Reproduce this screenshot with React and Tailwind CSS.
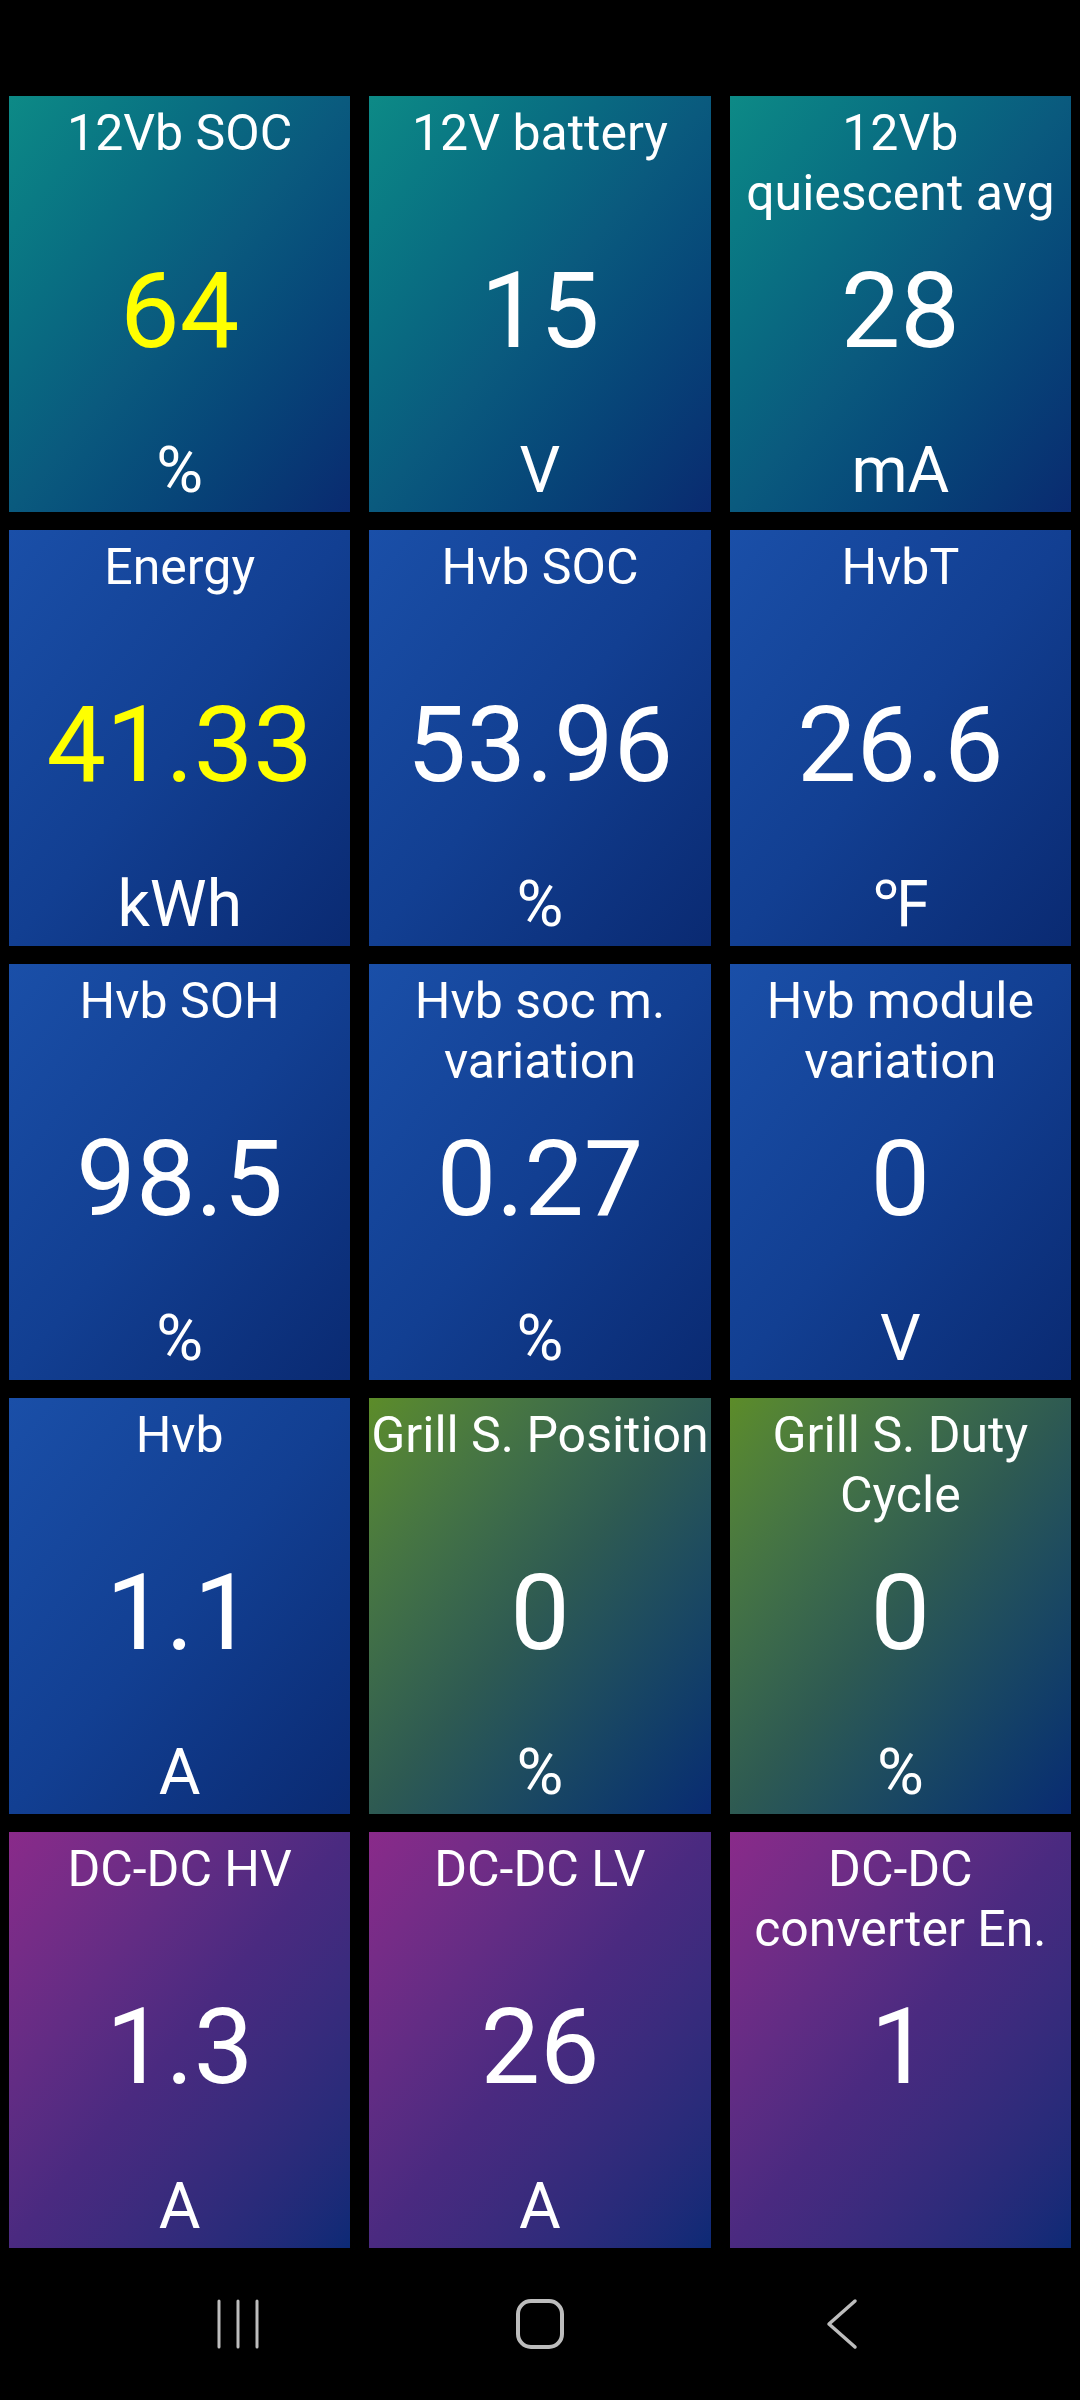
import React from 'react';

const TEAL = 'bg-linear-to-br from-[#0d8a86] via-[#0a5a7e] to-[#0a2a70]';
const BLUE = 'bg-linear-to-br from-[#1a4fa8] via-[#123f92] to-[#0a2a72]';
const GREEN = 'bg-linear-to-br from-[#5c8c28] via-[#2e5a52] to-[#0a2a72]';
const PURPLE = 'bg-linear-to-br from-[#8a2a8a] via-[#4a2a80] to-[#0c2a76]';

const tiles = [
  { title: ['12Vb SOC'], value: '64', unit: '%', bg: TEAL, yellow: true },
  { title: ['12V battery'], value: '15', unit: 'V', bg: TEAL },
  { title: ['12Vb', 'quiescent avg'], value: '28', unit: 'mA', bg: TEAL },
  { title: ['Energy'], value: '41.33', unit: 'kWh', bg: BLUE, yellow: true },
  { title: ['Hvb SOC'], value: '53.96', unit: '%', bg: BLUE },
  { title: ['HvbT'], value: '26.6', unit: '℉', bg: BLUE },
  { title: ['Hvb SOH'], value: '98.5', unit: '%', bg: BLUE },
  { title: ['Hvb soc m.', 'variation'], value: '0.27', unit: '%', bg: BLUE },
  { title: ['Hvb module', 'variation'], value: '0', unit: 'V', bg: BLUE },
  { title: ['Hvb'], value: '1.1', unit: 'A', bg: BLUE },
  { title: ['Grill S. Position'], value: '0', unit: '%', bg: GREEN },
  { title: ['Grill S. Duty', 'Cycle'], value: '0', unit: '%', bg: GREEN },
  { title: ['DC-DC HV'], value: '1.3', unit: 'A', bg: PURPLE },
  { title: ['DC-DC LV'], value: '26', unit: 'A', bg: PURPLE },
  { title: ['DC-DC', 'converter En.'], value: '1', unit: '', bg: PURPLE },
];

const Tile = ({ tile }) => (
  <div className={`flex h-[416px] flex-col items-center text-white ${tile.bg}`}>
    <div className="h-[153px] pt-[7px] text-center text-[50px] leading-[60px] whitespace-nowrap">
      {tile.title.map((line) => (
        <div key={line}>{line}</div>
      ))}
    </div>
    <div className={`text-[106px] leading-[124px] ${tile.yellow ? 'text-[#ffff00]' : 'text-white'}`}>
      {tile.value}
    </div>
    <div className="mt-auto mb-[5px] h-[72px] text-[64px] leading-[72px]">{tile.unit}</div>
  </div>
);

const NavBar = () => (
  <div className="flex h-[151px] items-center justify-center gap-[202px] bg-black pb-[2px]">
    <div className="flex w-[100px] justify-center">
      <svg width="46" height="50" viewBox="0 0 46 50" fill="none" stroke="#bdbdbd" strokeWidth="3" strokeLinecap="round">
        <line x1="4" y1="2" x2="4" y2="48" />
        <line x1="23" y1="2" x2="23" y2="48" />
        <line x1="42" y1="2" x2="42" y2="48" />
      </svg>
    </div>
    <div className="flex w-[100px] justify-center">
      <svg width="50" height="50" viewBox="0 0 50 50" fill="none" stroke="#bdbdbd" strokeWidth="4">
        <rect x="3" y="2" width="44" height="46" rx="13" />
      </svg>
    </div>
    <div className="flex w-[100px] justify-center">
      <svg width="32" height="52" viewBox="0 0 32 52" fill="none" stroke="#bdbdbd" strokeWidth="3.5" strokeLinecap="round" strokeLinejoin="round">
        <polyline points="29,3 3,26 29,49" />
      </svg>
    </div>
  </div>
);

export default function App() {
  return (
    <div className="flex h-[2400px] w-[1080px] flex-col bg-black font-['Roboto','Noto_Sans',sans-serif]">
      <div className="h-[97px]" />
      <div className="grid grid-cols-3 gap-x-[19px] gap-y-[18px] px-[9px]">
        {tiles.map((tile) => (
          <Tile key={tile.title.join(' ')} tile={tile} />
        ))}
      </div>
      <div className="mt-[2px] flex-1" />
      <NavBar />
    </div>
  );
}
